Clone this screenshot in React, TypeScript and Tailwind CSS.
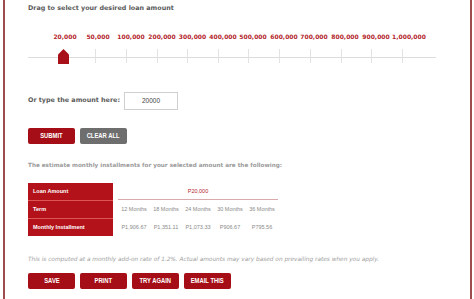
import React from "react";

const labels = [
  { t: "20,000", x: 37 },
  { t: "50,000", x: 70 },
  { t: "100,000", x: 103 },
  { t: "200,000", x: 134 },
  { t: "300,000", x: 164.5 },
  { t: "400,000", x: 195 },
  { t: "500,000", x: 225 },
  { t: "600,000", x: 256 },
  { t: "700,000", x: 286 },
  { t: "800,000", x: 317 },
  { t: "900,000", x: 348 },
  { t: "1,000,000", x: 381 },
];
const ticks = [67, 98, 129, 159, 190, 220, 251, 282, 313, 343, 374];

const terms = ["12 Months", "18 Months", "24 Months", "30 Months", "36 Months"];
const values = ["P1,906.67", "P1,351.11", "P1,073.33", "P906.67", "P795.56"];

function Btn({ children, gray }: { children: React.ReactNode; gray?: boolean }) {
  return (
    <div
      className={`flex h-[16px] w-[47px] items-center justify-center rounded-[2px] text-white ${
        gray ? "bg-[#6e6e6e]" : "bg-[#a50e16]"
      }`}
    >
      <span
        className="inline-block scale-x-[0.78] whitespace-nowrap text-[7.5px] font-bold"
        style={{ fontFamily: '"Liberation Sans", Arial, sans-serif' }}
      >
        {children}
      </span>
    </div>
  );
}

export default function App() {
  return (
    <div className="h-[299px] w-[474px] overflow-hidden bg-white" style={{ fontFamily: '"DejaVu Sans", Verdana, sans-serif' }}>
      <div className="ml-[3px] flex h-full w-[469px] flex-col border-x-2 border-[#9e4d4d] pl-[23px]">
        <div className="mt-[4px] h-[8px] whitespace-nowrap text-[6.4px] font-bold leading-[8px] text-[#5a5a5a]">
          Drag to select your desired loan amount
        </div>
        <div className="relative mt-[18px] h-[36px] w-[410px]">
          {labels.map((l) => (
            <div
              key={l.t}
              className="absolute top-[3px] h-[8px] -translate-x-1/2 whitespace-nowrap text-[6px] font-bold leading-[8px] text-[#b3242b]"
              style={{ left: l.x }}
            >
              {l.t}
            </div>
          ))}
          <div className="absolute left-0 top-[27px] h-[1px] w-[408px] bg-[#dcdcdc]" />
          {ticks.map((x) => (
            <div key={x} className="absolute top-[19px] h-[14px] w-[1px] bg-[#e2e2e2]" style={{ left: x }} />
          ))}
          <svg className="absolute left-[30px] top-[19px]" width="11" height="15" viewBox="0 0 11 15">
            <polygon points="5.5,0 11,5.5 11,15 0,15 0,5.5" fill="#a8101a" />
          </svg>
        </div>
        <div className="mt-[26px] flex h-[18px] items-center">
          <div className="whitespace-nowrap text-[6.4px] font-bold text-[#5a5a5a]">Or type the amount here:</div>
          <div
            className="ml-[4px] flex h-[18px] w-[54px] items-center justify-center border border-[#cfcfcf] text-[6.5px] text-[#444]"
            style={{ fontFamily: '"Liberation Sans", Arial, sans-serif' }}
          >
            20000
          </div>
        </div>
        <div className="mt-[18px] flex gap-[5px]">
          <Btn>SUBMIT</Btn>
          <Btn gray>CLEAR ALL</Btn>
        </div>
        <div className="mt-[17px] h-[8px] whitespace-nowrap text-[5.7px] font-bold leading-[8px] text-[#9a9a9a]">
          The estimate monthly installments for your selected amount are the following:
        </div>
        <div className="mt-[14px] flex" style={{ fontFamily: '"Liberation Sans", Arial, sans-serif' }}>
          <div className="flex w-[85px] flex-col bg-[#b3121b] text-[5.5px] font-bold text-white">
            <div className="flex h-[18px] items-center border-b border-[#d55] pl-[5px]">Loan Amount</div>
            <div className="flex h-[18px] items-center border-b border-[#d55] pl-[5px]">Term</div>
            <div className="flex h-[17px] items-center pl-[5px]">Monthly Installment</div>
          </div>
          <div className="ml-[5px] flex w-[160px] flex-col text-[5.5px] text-[#8a8a8a]">
            <div className="flex h-[17px] items-center justify-center border-b border-[#d9a9ab] text-[#b3242b]">
              P20,000
            </div>
            <div className="flex h-[18px] items-center">
              {terms.map((t) => (
                <div key={t} className="w-[32px] text-center">{t}</div>
              ))}
            </div>
            <div className="flex h-[18px] items-center">
              {values.map((t) => (
                <div key={t} className="w-[32px] text-center">{t}</div>
              ))}
            </div>
          </div>
        </div>
        <div className="mt-[19px] h-[8px] whitespace-nowrap text-[5.8px] italic leading-[8px] text-[#a0a0a0]">
          This is computed at a monthly add-on rate of 1.2%. Actual amounts may vary based on prevailing rates when you apply.
        </div>
        <div className="mt-[10px] flex gap-[5px]">
          <Btn>SAVE</Btn>
          <Btn>PRINT</Btn>
          <Btn>TRY AGAIN</Btn>
          <Btn>EMAIL THIS</Btn>
        </div>
      </div>
    </div>
  );
}
